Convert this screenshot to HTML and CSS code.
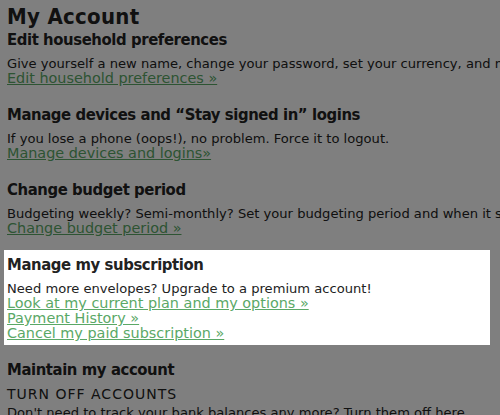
FILE: index.html
```html
<!DOCTYPE html>
<html lang="en">
<head>
  <meta charset="UTF-8">
  <meta name="viewport" content="width=device-width, initial-scale=1.0">
  <title>My Account</title>
  <link rel="stylesheet" href="styles.css">
</head>
<body>
  <main class="page">
    <h1>My Account</h1>

    <section class="block">
      <h2>Edit household preferences</h2>
      <p>Give yourself a new name, change your password, set your currency, and more.</p>
      <a href="#">Edit household preferences &raquo;</a>
    </section>

    <section class="block">
      <h2>Manage devices and &ldquo;Stay signed in&rdquo; logins</h2>
      <p>If you lose a phone (oops!), no problem. Force it to logout.</p>
      <a href="#">Manage devices and logins&raquo;</a>
    </section>

    <section class="block">
      <h2>Change budget period</h2>
      <p>Budgeting weekly? Semi-monthly? Set your budgeting period and when it starts.</p>
      <a href="#">Change budget period &raquo;</a>
    </section>

    <section class="block highlight">
      <h2>Manage my subscription</h2>
      <p>Need more envelopes? Upgrade to a premium account!</p>
      <a href="#">Look at my current plan and my options &raquo;</a>
      <a href="#">Payment History &raquo;</a>
      <a href="#">Cancel my paid subscription &raquo;</a>
    </section>

    <section class="block">
      <h2>Maintain my account</h2>
      <h3>Turn off accounts</h3>
      <p>Don't need to track your bank balances any more? Turn them off here.</p>
    </section>
  </main>
  <div class="overlay"></div>
</body>
</html>
```

FILE: styles.css
```css
body {
  margin: 0;
  background: #fff;
  color: #222;
  font-family: "DejaVu Sans", Verdana, sans-serif;
  font-size: 13.1px;
  line-height: 15px;
  overflow: hidden;
}
.page {
  width: 486px;
  padding: 0 4px;
}
h1 {
  margin: 0 0 -3px;
  padding: 6px 3px 0;
  font-family: "DejaVu Sans Condensed", "DejaVu Sans", sans-serif;
  font-size: 22px;
  letter-spacing: 0.3px;
  line-height: 22px;
}
.block {
  padding: 5px 3px 4px;
  margin-bottom: 10px;
}
.block h2 {
  margin: 0 0 6px;
  font-family: "DejaVu Sans Condensed", "DejaVu Sans", sans-serif;
  font-size: 16.5px;
  letter-spacing: -0.4px;
  line-height: 20px;
}
.block h3 {
  margin: 4px 0 3px;
  font-size: 14px;
  font-weight: normal;
  text-transform: uppercase;
  letter-spacing: 1px;
  line-height: 16px;
}
.block p {
  margin: 0;
  white-space: nowrap;
}
.block a {
  display: block;
  color: #5aa866;
  font-size: 14.4px;
  white-space: nowrap;
}
.highlight {
  position: relative;
  z-index: 2;
  background: #fff;
}
.overlay {
  position: fixed;
  inset: 0;
  z-index: 1;
  background: rgba(0, 0, 0, 0.5);
}
```
